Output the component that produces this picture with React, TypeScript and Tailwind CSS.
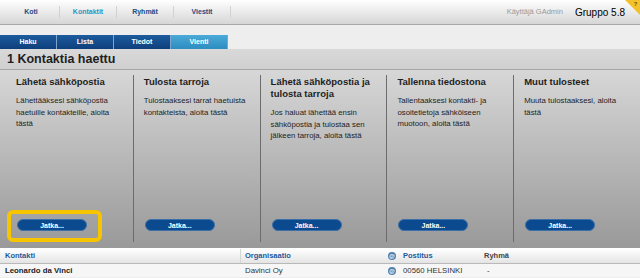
import React from "react";

const navItems = [
  { label: "Koti", active: false },
  { label: "Kontaktit", active: true },
  { label: "Ryhmät", active: false },
  { label: "Viestit", active: false },
];

const tabs = [
  { label: "Haku", active: false },
  { label: "Lista", active: false },
  { label: "Tiedot", active: false },
  { label: "Vienti", active: true },
];

const actions = [
  {
    title: "Lähetä sähköpostia",
    text: "Lähettääksesi sähköpostia haetuille kontakteille, aloita tästä",
  },
  {
    title: "Tulosta tarroja",
    text: "Tulostaaksesi tarrat haetuista kontakteista, aloita tästä",
  },
  {
    title: "Lähetä sähköpostia ja tulosta tarroja",
    text: "Jos haluat lähettää ensin sähköpostia ja tulostaa sen jälkeen tarroja, aloita tästä",
  },
  {
    title: "Tallenna tiedostona",
    text: "Tallentaaksesi kontakti- ja osoitetietoja sähköiseen muotoon, aloita tästä",
  },
  {
    title: "Muut tulosteet",
    text: "Muuta tulostaaksesi, aloita tästä",
  },
];

function AtIcon() {
  return (
    <span className="inline-flex items-center justify-center w-[8px] h-[8px] rounded-full bg-[#4f7fae] text-white text-[6px] font-bold leading-none">
      @
    </span>
  );
}

export default function App() {
  return (
    <main className="w-[640px] h-[278px] overflow-hidden bg-[#eeeeee] font-['Liberation_Sans',Arial,sans-serif] text-[#1e1e1e]">
      {/* top navigation */}
      <div className="relative h-[25px] flex items-center bg-gradient-to-b from-[#ffffff] to-[#d6d6d6] border-b border-[#a8a8a8]">
        <ul className="flex pl-[3px]">
          {navItems.map((item) => (
            <li
              key={item.label}
              className={`w-[57px] h-[12px] flex items-center justify-center border-r border-[#d2d2d2] text-[7px] font-bold ${
                item.active ? "text-[#2f93c4]" : "text-[#1b4c86]"
              }`}
            >
              {item.label}
            </li>
          ))}
        </ul>
        <div className="ml-auto flex items-center pr-[15px]">
          <span className="text-[7.5px] text-[#9a9a9a] mr-[12px]">Käyttäjä GAdmin</span>
          <span className="text-[10px] text-black">Gruppo 5.8</span>
        </div>
        <svg className="absolute top-0 right-0" width="15" height="15" viewBox="0 0 15 15">
          <polygon points="0,0 15,0 15,15" fill="#f3c12b" />
          <text x="10.5" y="6" fontSize="5" fontWeight="bold" fill="#5a4300" textAnchor="middle">
            ?
          </text>
        </svg>
      </div>

      {/* sub tabs */}
      <div className="pt-[10px] flex">
        {tabs.map((tab) => (
          <div
            key={tab.label}
            className={`w-[57px] h-[14px] flex items-center justify-center text-[7px] font-bold text-white border-r border-[#7ea4cc] ${
              tab.active
                ? "bg-gradient-to-b from-[#4aaad8] to-[#2d8cc0]"
                : "bg-gradient-to-b from-[#1d5c9e] to-[#0e3f7c]"
            }`}
          >
            {tab.label}
          </div>
        ))}
      </div>

      {/* heading */}
      <div className="h-[21px] bg-gradient-to-b from-[#d9d9d9] to-[#cfcfcf] border-b border-[#a6a6a6] pl-[7px] flex items-center">
        <h1 className="text-[12.5px] font-bold leading-none text-[#1e1e1e]">1 Kontaktia haettu</h1>
      </div>

      {/* export actions */}
      <div className="h-[178px] flex pl-[6px] pt-[5px] pb-[6px] bg-gradient-to-b from-[#d7d7d7] to-[#999999]">
        {actions.map((action, index) => (
          <div
            key={action.title}
            className={`w-[127px] flex flex-col pl-[10px] pr-[12px] pt-[1px] ${
              index > 0 ? "border-l border-[#6c6c6c]" : ""
            }`}
          >
            <h2 className="text-[9.5px] font-bold leading-[12px]">{action.title}</h2>
            <p className="mt-[7px] text-[7.8px] leading-[11.5px]">{action.text}</p>
            <div className="relative mt-auto mb-[11px] ml-[1px] w-[70px] h-[12px]">
              {index === 0 && (
                <div className="absolute left-[-10px] top-[-9px] w-[95px] h-[32px] rounded-[6px] border-[4px] border-[#f7c500]" />
              )}
              <button className="block w-[70px] h-[12px] rounded-full bg-[#0b4a8e] border border-[#3a6fa8] text-white text-[7px] font-bold leading-none">
                Jatka...
              </button>
            </div>
          </div>
        ))}
      </div>

      {/* results table */}
      <div className="bg-white pt-[1px]">
        <div className="h-[15px] flex items-center text-[7.5px] font-bold bg-gradient-to-b from-[#ffffff] to-[#e4e4e4] border-b border-[#b9b9b9]">
          <div className="w-[240px] pl-[5px] text-[#1d5a9c]">Kontakti</div>
          <div className="w-[145px] h-full flex items-center pl-[4px] border-l border-[#d6d6d6] text-[#1d5a9c]">Organisaatio</div>
          <div className="w-[15px] flex items-center pl-[3px]">
            <AtIcon />
          </div>
          <div className="w-[81px] pl-[3px] text-[#1d5a9c]">Postitus</div>
          <div className="pl-[3px] text-[#444]">Ryhmä</div>
        </div>
        <div className="h-[13px] flex items-center text-[7.8px] bg-[#f6f6f6]">
          <div className="w-[240px] pl-[5px] font-bold text-[#222]">Leonardo da Vinci</div>
          <div className="w-[145px] pl-[5px] text-[#333]">Davinci Oy</div>
          <div className="w-[15px] flex items-center pl-[3px]">
            <AtIcon />
          </div>
          <div className="w-[81px] pl-[3px] text-[#333]">00560 HELSINKI</div>
          <div className="pl-[6px] text-[#333]">-</div>
        </div>
      </div>
    </main>
  );
}
